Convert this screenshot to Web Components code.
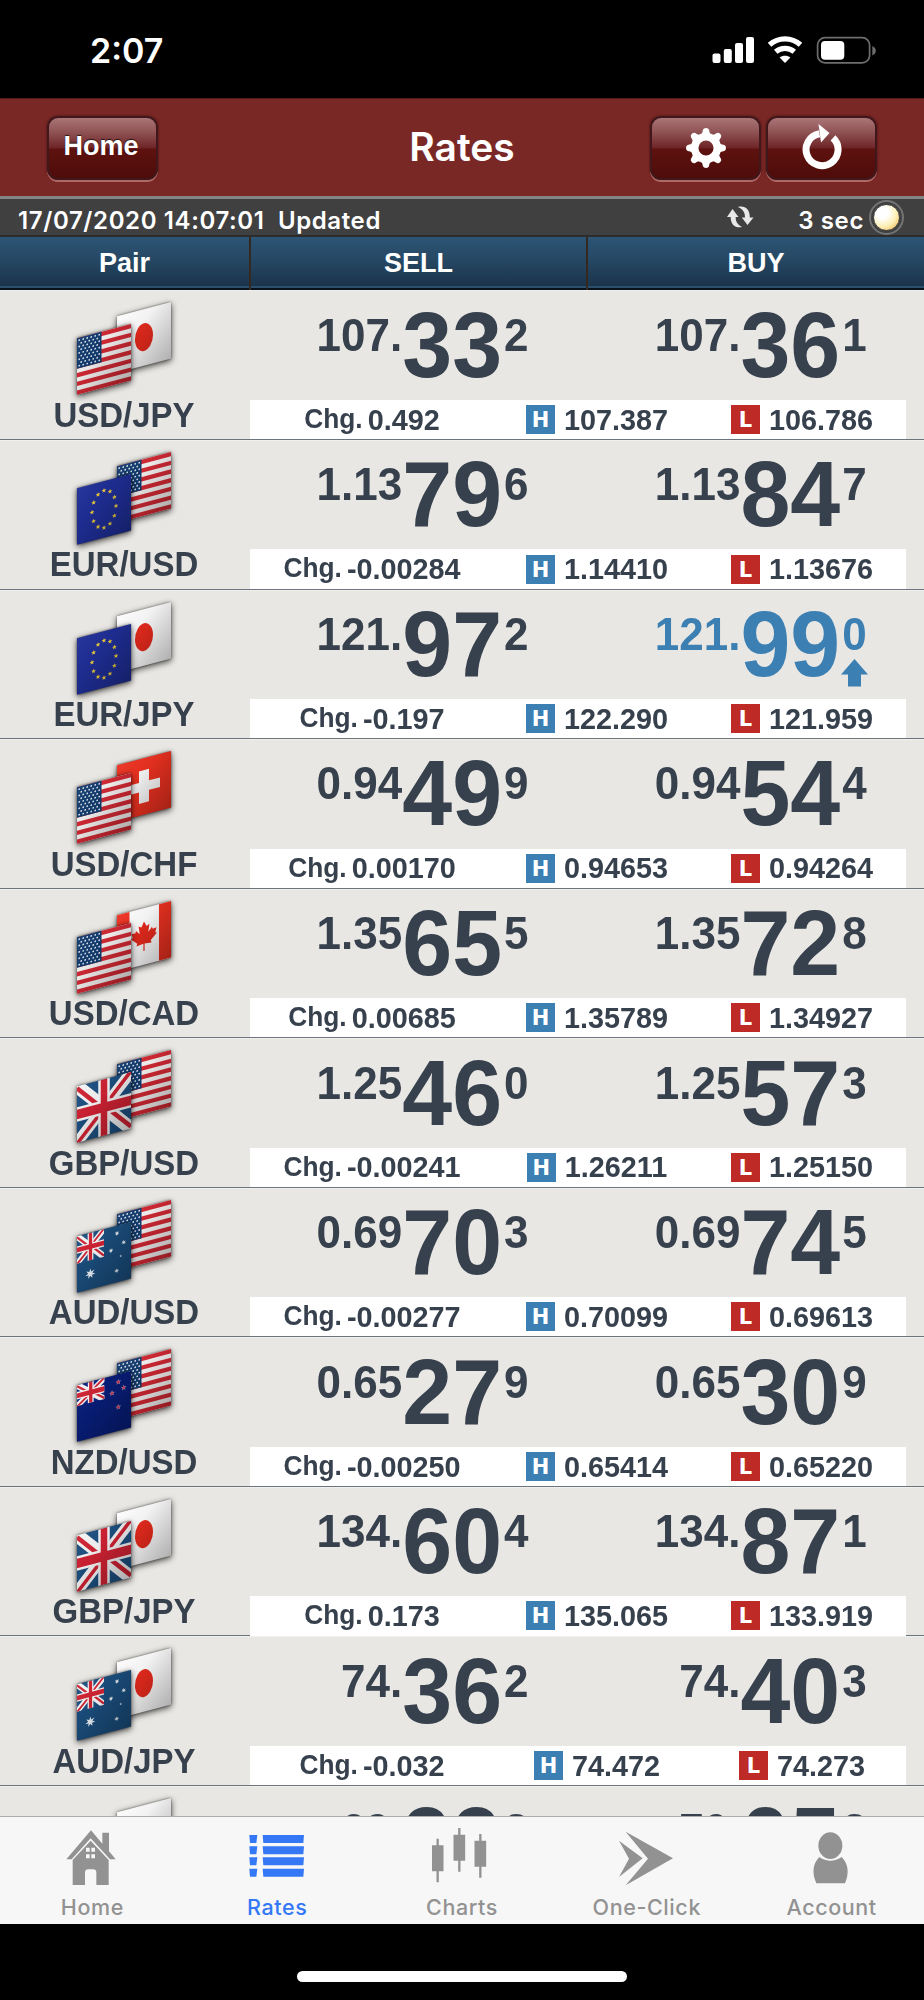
<!DOCTYPE html>
<html lang="en">
<head>
<meta charset="utf-8">
<title>Rates</title>
<style>
  html, body { margin: 0; background: #000; }
  body { width: 924px; height: 2000px; overflow: hidden; font-family: "Liberation Sans", Arial, sans-serif; }
</style>
</head>
<body>
<rates-app></rates-app>

<script>
// ---------- flags, each drawn in a 54 x 56.5 box ----------
const W = 54, H = 56.5;

function star(cx, cy, r, fill, points = 5) {
  let d = "";
  for (let i = 0; i < points * 2; i++) {
    const rr = i % 2 ? r * 0.42 : r;
    const a = -Math.PI / 2 + i * Math.PI / points;
    d += `${(cx + rr * Math.cos(a)).toFixed(2)},${(cy + rr * Math.sin(a)).toFixed(2)} `;
  }
  return `<polygon points="${d}" fill="${fill}"/>`;
}

function unionJack(w, h, blue) {
  const k = w / 54;
  return `<svg width="${w}" height="${h}" viewBox="0 0 ${w} ${h}">
    <rect width="${w}" height="${h}" fill="${blue}"/>
    <path d="M0 0L${w} ${h}M${w} 0L0 ${h}" stroke="#f4f4f4" stroke-width="${12 * k}"/>
    <path d="M0 ${2 * k}L${w / 2} ${h / 2 + 2 * k}M${w} ${h - 2 * k}L${w / 2} ${h / 2 - 2 * k}M${w} ${-k}L${w / 2} ${h / 2 - k}M0 ${h + k}L${w / 2} ${h / 2 + k}" stroke="#cf2233" stroke-width="${4 * k}"/>
    <path d="M${w / 2} 0V${h}" stroke="#f4f4f4" stroke-width="${11.5 * k}"/>
    <path d="M0 ${h / 2}H${w}" stroke="#f4f4f4" stroke-width="${14.5 * k}"/>
    <path d="M${w / 2} 0V${h}" stroke="#cf2233" stroke-width="${6.5 * k}"/>
    <path d="M0 ${h / 2}H${w}" stroke="#cf2233" stroke-width="${9.5 * k}"/>
  </svg>`;
}

const flags = {
  USD() {
    let s = `<rect width="${W}" height="${H}" fill="#f6f3f3"/>`;
    const h = H / 13;
    for (let i = 0; i < 13; i += 2) s += `<rect y="${i * h}" width="${W}" height="${h}" fill="#d32934"/>`;
    s += `<rect width="24.5" height="${h * 7}" fill="#123b6e"/>`;
    for (let r = 0; r < 9; r++)
      for (let c = 0; c < (r % 2 ? 5 : 6); c++)
        s += `<circle cx="${2.2 + c * 4 + (r % 2 ? 2 : 0)}" cy="${2.4 + r * 3.2}" r=".9" fill="#dfe7f0"/>`;
    return s;
  },
  JPY: () => `<rect width="${W}" height="${H}" fill="#fcfcfc"/><ellipse cx="27" cy="28" rx="9" ry="13.8" fill="#e62a1d"/>`,
  EUR() {
    let s = `<rect width="${W}" height="${H}" fill="#1f2e96"/>`;
    for (let i = 0; i < 12; i++) {
      const a = i * Math.PI / 6;
      s += star(27 + 12 * Math.sin(a), 28 - 18.6 * Math.cos(a), 2.5, "#f2cf3a");
    }
    return s;
  },
  CHF: () => `<rect width="${W}" height="${H}" fill="#ec3120"/><path d="M22 12H32V23.5H43V33H32V44.5H22V33H11V23.5H22Z" fill="#f8f8f8"/>`,
  CAD: () => `<rect width="${W}" height="${H}" fill="#fcfcfc"/><rect width="12.5" height="${H}" fill="#ec3120"/><rect x="42" width="12" height="${H}" fill="#ec3120"/>
    <path transform="translate(27 28) scale(1 1.05)" fill="#e62a1d" d="M0-14L2.6-9L5.4-10.5L4.3-3L8-7L8.7-4.8L12.5-5.3L11.2-1L13-.2L6.8 5.5L7.5 8L.6 7.2V14H-.6V7.2L-7.5 8L-6.8 5.5L-13-.2L-11.2-1L-12.5-5.3L-8.7-4.8L-8-7L-4.3-3L-5.4-10.5L-2.6-9Z"/>`,
  GBP: () => unionJack(W, H, "#1c4f80"),
  AUD: () => `<rect width="${W}" height="${H}" fill="#1a4d7c"/>${unionJack(27, 27.5, "#1c4f80")}`
    + star(40, 7.7, 2.5, "#e9f1f6", 7) + star(46.7, 18.4, 2.5, "#e9f1f6", 7) + star(34, 23.4, 2.5, "#e9f1f6", 7)
    + star(43.7, 31.3, 1.4, "#e9f1f6") + star(39.7, 45, 2.5, "#e9f1f6", 7) + star(13.3, 41, 5.2, "#e9f1f6", 7),
  NZD: () => `<rect width="${W}" height="${H}" fill="#081d78"/>${unionJack(27.5, 21, "#0b2280")}`
    + [[41.3, 7.6], [35, 17.3], [46.7, 14.7], [41.3, 32.7]].map(p => star(p[0], p[1], 3, "#b9aecb") + star(p[0], p[1], 2.2, "#d8304a")).join("")
};

class FlagPair extends HTMLElement {
  connectedCallback() {
    const [front, back] = this.getAttribute("pair").split("/");
    this.attachShadow({mode: "open"}).innerHTML = `
      <style>
        :host { display: block; height: 108.5px; }
        svg { display: block; }
        .flag { filter: drop-shadow(0 0 1px rgba(0,0,0,.45)) drop-shadow(0 2px 3px rgba(0,0,0,.7)); }
      </style>
      <svg width="250" height="112" viewBox="0 0 250 112">
        <defs>
          <linearGradient id="shade" x1="0" y1="0" x2="1" y2="1">
            <stop offset="0" stop-color="#fff" stop-opacity=".04"/>
            <stop offset=".35" stop-color="#000" stop-opacity=".04"/>
            <stop offset="1" stop-color="#000" stop-opacity=".3"/>
          </linearGradient>
        </defs>
        <g class="flag"><g transform="matrix(1 -.265 0 1 117 26.3)">${flags[back]()}<rect width="${W}" height="${H}" fill="url(#shade)"/></g></g>
        <g class="flag"><g transform="matrix(1 -.265 0 1 77 48.3)">${flags[front]()}<rect width="${W}" height="${H}" fill="url(#shade)"/></g></g>
      </svg>`;
  }
}
customElements.define("flag-pair", FlagPair);

// ---------- a price: handle, big figures and the last digit ----------
class PriceQuote extends HTMLElement {
  connectedCallback() {
    const [handle, big, last] = this.getAttribute("value").split(" ");
    this.attachShadow({mode: "open"}).innerHTML = `
      <style>
        :host { display: flex; position: relative; justify-content: flex-end; align-items: flex-start; box-sizing: border-box;
          padding-right: 59.5px; height: 109px; font-weight: bold; color: #37414d; }
        :host([up]) { color: #3b7fb3; }
        span { display: block; line-height: 1; transform-origin: 0 84.65%; white-space: nowrap; }
        .small { font-size: 44px; margin-top: 23.4px; transform: scaleY(1.045); }
        .big { font-size: 89.7px; margin: 11.4px 2px 0 0; transform: scaleY(1.025); }
        svg { position: absolute; right: 56px; top: 69px; }
      </style>
      <span class="small">${handle}</span><span class="big">${big}</span><span class="small">${last}</span>
      ${this.hasAttribute("up") ? `<svg width="27" height="28" viewBox="0 0 27 28"><path d="M13.5 0L27 15.5H20V27.5H7V15.5H0Z" fill="currentColor"/></svg>` : ""}`;
  }
}
customElements.define("price-quote", PriceQuote);

class RangeBadge extends HTMLElement {
  connectedCallback() {
    this.attachShadow({mode: "open"}).innerHTML = `
      <style>
        :host { display: flex; align-items: center; justify-content: center; gap: 9px; }
        b { display: block; width: 29px; height: 29px; background: ${this.getAttribute("color")}; color: #fff;
          font: bold 21px/31px "DejaVu Sans", sans-serif; text-align: center; }
        span { transform: scaleY(1.04); padding-top: 1px; }
      </style>
      <b>${this.getAttribute("letter")}</b><span><slot></slot></span>`;
  }
}
customElements.define("range-badge", RangeBadge);

class RateRow extends HTMLElement {
  connectedCallback() {
    const a = n => this.getAttribute(n);
    // a row without a change value shows only its flags and prices
    const full = a("chg") !== "";
    this.attachShadow({mode: "open"}).innerHTML = `
      <style>
        :host { display: grid; grid-template-columns: 250px 1fr; height: 149.57px; flex: none; box-sizing: border-box;
          border-bottom: 1px solid #6c747d; box-shadow: inset 0 1px #f1f0ed; color: #37414d; font-weight: bold; }
        .name { font-size: 33px; line-height: 1; text-align: center; padding-right: 2px;
          transform: scaleY(1.045); transform-origin: 0 84.65%; }
        .quotes { display: grid; grid-template-columns: 338px 1fr; height: 109.5px; }
        price-quote:last-child { padding-right: 57.3px; }
        .bar { display: grid; grid-template-columns: 244px 206px 204px; width: 656px; height: 39.2px; background: #fff;
          font-size: 28.8px; line-height: 1; align-items: center; }
        .chg { display: flex; justify-content: center; align-items: center; gap: 5px; }
        .chg span { transform: scaleY(1.04); padding-top: 1px; }
        small { font-size: 26.3px; transform: scaleY(1.04); position: relative; top: -.5px; }
      </style>
      <div><flag-pair pair="${a("pair")}"></flag-pair>${full ? `<div class="name">${a("pair")}</div>` : ""}</div>
      <div>
        <div class="quotes">
          <price-quote value="${a("sell")}"></price-quote>
          <price-quote value="${a("buy")}" ${this.hasAttribute("up") ? "up" : ""}></price-quote>
        </div>
        ${full ? `<div class="bar">
          <div class="chg"><small>Chg.</small><span>${a("chg")}</span></div>
          <range-badge letter="H" color="#3b7fb3">${a("high")}</range-badge>
          <range-badge letter="L" color="#be2a26">${a("low")}</range-badge>
        </div>` : ""}
      </div>`;
  }
}
customElements.define("rate-row", RateRow);

class StatusBar extends HTMLElement {
  constructor() {
    super();
    this.attachShadow({mode: "open"}).innerHTML = `
      <style>
        :host { display: flex; justify-content: space-between; align-items: center; height: 98px; box-sizing: border-box;
          padding: 2px 47px 0 90px; background: #000; color: #fff; font: 600 34px Inter, sans-serif; }
      </style>
      <span>2:07</span>
      <svg width="165" height="28" viewBox="712 36 165 28" fill="#fff">
        <rect x="712.5" y="53.5" width="8" height="9.5" rx="2"/><rect x="723.8" y="49" width="8" height="14" rx="2"/>
        <rect x="735" y="43" width="8" height="20" rx="2"/><rect x="746" y="37" width="8" height="26" rx="2"/>
        <path d="M785 63L779.6 57.6C782.5 55.2 787.5 55.2 790.4 57.6Z"/>
        <path d="M769.5 44.8C778.5 36.9 791.5 36.9 800.5 44.8M775.7 51.8C781 47.2 789 47.2 794.3 51.8" fill="none" stroke="#fff" stroke-width="5.2"/>
        <rect x="817.6" y="37.6" width="52" height="25.3" rx="7.5" fill="none" stroke="#6d6d6d" stroke-width="1.7"/>
        <rect x="821" y="41" width="23.3" height="18.7" rx="4"/>
        <path d="M872.3 46V55.5C877 53.5 877 48 872.3 46Z" fill="#6d6d6d"/>
      </svg>`;
  }
}
customElements.define("status-bar", StatusBar);

class GlossButton extends HTMLElement {
  constructor() {
    super();
    this.attachShadow({mode: "open"}).innerHTML = `
      <style>
        :host { display: flex; align-items: center; justify-content: center; width: 111px; height: 64px; box-sizing: border-box;
          border: 2px solid #40171a; border-radius: 11px; color: #fff; font: bold 27px/1 "Liberation Sans", sans-serif;
          text-shadow: 0 -1px 1px rgba(0,0,0,.7); padding: 0 3px 2px 0;
          background: linear-gradient(#aa7678 0, #8d5052 25%, #702628 49%, #5e120f 52%, #4e0c0a);
          box-shadow: 0 2px 0 rgba(255,190,190,.45), 0 0 2px 1px rgba(60,15,15,.4); }
        :host([icon]) { padding: 0; }
      </style><slot></slot>`;
  }
}
customElements.define("gloss-button", GlossButton);

class NavBar extends HTMLElement {
  constructor() {
    super();
    let teeth = "";
    for (let i = 0; i < 8; i++) teeth += `<path transform="rotate(${i * 45})" d="M-7-12C-3.5-14-3.6-16-3-18.2Q-2.5-20 0-20T3-18.2C3.6-16 3.5-14 7-12Z"/>`;
    this.attachShadow({mode: "open"}).innerHTML = `
      <style>
        :host { display: grid; grid-template-columns: 1fr auto 1fr; height: 98px; box-sizing: border-box;
          padding: 0 47px; align-items: center; background: #7a2825; color: #fff; border-top: 1px solid #551d1b; }
        h1 { margin: 0 0 2px; font: 600 39px/1 Inter, sans-serif; }
        .right { display: flex; justify-content: flex-end; gap: 5px; }
      </style>
      <gloss-button>Home</gloss-button>
      <h1><slot></slot></h1>
      <div class="right">
        <gloss-button icon><svg width="40" height="42" viewBox="-20 -21 40 42" fill="#fff">${teeth}<circle r="11.3" fill="none" stroke="#fff" stroke-width="7.5"/></svg></gloss-button>
        <gloss-button icon><svg width="40" height="47" viewBox="-20 -25.5 40 47">
          <path d="M-2.5-15.7A16 16 0 1 0 11-11.6" fill="none" stroke="#fff" stroke-width="7"/>
          <path d="M-3.5-25.5L7.5-16.5L-1-7Z" fill="#fff"/>
        </svg></gloss-button>
      </div>`;
  }
}
customElements.define("nav-bar", NavBar);

class UpdateBar extends HTMLElement {
  constructor() {
    super();
    this.attachShadow({mode: "open"}).innerHTML = `
      <style>
        :host { display: flex; align-items: center; height: 41px; box-sizing: border-box; padding: 0 22px 0 18px;
          background: #404040; border-top: 3px solid #858585; border-bottom: 2px solid #2c2c2c; color: #fff;
          font: 600 24px/1 Inter, sans-serif; letter-spacing: .62px; white-space: pre; }
        .date { flex: 1; padding-top: 7px; }
        .sec { padding: 7px 7px 0 44px; }
        .orb { width: 27px; height: 27px; border-radius: 50%; border: 1px solid #484848; outline: 2px solid #747474; outline-offset: 2px;
          background: radial-gradient(circle at 32% 28%, #fff 25%, #fdeeb4 60%, #eaa63d 100%); box-sizing: border-box; margin: 0 2px; }
      </style>
      <span class="date">17/07/2020 14:07:01  Updated</span>
      <svg width="27" height="22" viewBox="0 0 27 22">
        <path d="M5.5 3L11.5 11H8.7C8.5 15 10 18 15 21C9 22.5 3.5 19 3.7 11H0Z" fill="#e8e8e8"/>
        <path d="M20.5 19L14.8 11.5H18C18 7 16.5 3.5 11 1C18-.8 23 3.5 22.8 11.5H26.5Z" fill="#e8e8e8"/>
      </svg>
      <span class="sec">3 sec</span><div class="orb"></div>`;
  }
}
customElements.define("update-bar", UpdateBar);

class ColumnHead extends HTMLElement {
  constructor() {
    super();
    this.attachShadow({mode: "open"}).innerHTML = `
      <style>
        :host { display: grid; grid-template-columns: 251px 337px 1fr; height: 53px; box-sizing: border-box; background: linear-gradient(#2d5575, #254763 45%, #1a3248 96%);
          box-shadow: inset 0 -2px #081019, inset 0 -4px #2a506e; color: #fff; font: bold 27px/53px "Liberation Sans", sans-serif; text-align: center; }
        div { border-right: 2px solid #35291f; }
        div:last-child { border: 0; }
      </style>
      <div>Pair</div><div>SELL</div><div>BUY</div>`;
  }
}
customElements.define("column-head", ColumnHead);

// ---------- bottom tabs ----------
const tabIcons = {
  home: `<svg viewBox="187 140 180 180"><path d="M274 150L308 190V157H328V213L348 237H331L273 174L216 237H200Z"/>
    <path fill-rule="evenodd" d="M273 181L327 239V314H290V277Q290 267 280 267H266Q256 267 256 277V314H219V239ZM259 202V214H270V202ZM275 202V214H286V202ZM259 222V234H270V222ZM275 222V234H286V222Z"/></svg>`,
  rates: `<svg viewBox="742 140 180 180">${[164, 198, 231, 265].map(y => `<path d="M749 ${y}H773L770 ${y + 24}H751ZM789 ${y}H913L911 ${y + 24}H791Z"/>`).join("")}</svg>`,
  charts: `<svg viewBox="1296 140 180 180">${[[1313, 175], [1378, 143], [1441, 161]].map(([x, y]) => `<path d="M${x - 3.5} ${y}h7v20h14v78h-14v33h-7v-33h-14v-78h14Z"/>`).join("")}</svg>`,
  click: `<svg viewBox="464 140 180 180"><path d="M490 154L632 234L490 315L557 235ZM470 181L541 234L470 290L500 235Z"/></svg>`,
  account: `<svg viewBox="1019 140 180 180"><ellipse cx="1104" cy="196" rx="36" ry="40"/><path d="M1071 230Q1104 253 1138 230Q1168 262 1148 309H1062Q1041 262 1071 230Z"/></svg>`
};

class TabItem extends HTMLElement {
  connectedCallback() {
    this.attachShadow({mode: "open"}).innerHTML = `
      <style>
        :host { display: flex; flex-direction: column; align-items: center; flex: 1; padding-top: 10px; color: #929292;
          font: 450 21.5px/26px Inter, sans-serif; letter-spacing: .6px; }
        :host([active]) { color: #3478f6; }
        svg { width: 60px; height: 60px; fill: currentColor; display: block; margin-bottom: 7px; }
      </style>${tabIcons[this.getAttribute("icon")]}<slot></slot>`;
  }
}
customElements.define("tab-item", TabItem);

class TabBar extends HTMLElement {
  constructor() {
    super();
    this.attachShadow({mode: "open"}).innerHTML = `
      <style>:host { display: flex; height: 108px; flex: none; box-sizing: border-box; background: #f7f7f7; border-top: 1px solid #acacac; }</style><slot></slot>`;
  }
}
customElements.define("tab-bar", TabBar);

const rates = [
  ["USD/JPY", "107. 33 2", "107. 36 1", "0.492", "107.387", "106.786"],
  ["EUR/USD", "1.13 79 6", "1.13 84 7", "-0.00284", "1.14410", "1.13676"],
  ["EUR/JPY", "121. 97 2", "121. 99 0", "-0.197", "122.290", "121.959", "up"],
  ["USD/CHF", "0.94 49 9", "0.94 54 4", "0.00170", "0.94653", "0.94264"],
  ["USD/CAD", "1.35 65 5", "1.35 72 8", "0.00685", "1.35789", "1.34927"],
  ["GBP/USD", "1.25 46 0", "1.25 57 3", "-0.00241", "1.26211", "1.25150"],
  ["AUD/USD", "0.69 70 3", "0.69 74 5", "-0.00277", "0.70099", "0.69613"],
  ["NZD/USD", "0.65 27 9", "0.65 30 9", "-0.00250", "0.65414", "0.65220"],
  ["GBP/JPY", "134. 60 4", "134. 87 1", "0.173", "135.065", "133.919"],
  ["AUD/JPY", "74. 36 2", "74. 40 3", "-0.032", "74.472", "74.273"],
  ["NZD/JPY", "69. 99 8", "70. 05 8", "", "", ""]
];

class RatesApp extends HTMLElement {
  constructor() {
    super();
    this.attachShadow({mode: "open"}).innerHTML = `
      <style>
        :host { display: flex; flex-direction: column; width: 924px; height: 2000px; background: #000; }
        .list { display: flex; flex-direction: column; height: 1526px; box-sizing: border-box; padding-top: .4px; overflow: hidden; background: #e9e7e3; }
        .foot { display: flex; justify-content: center; padding-top: 47px; }
        .foot i { width: 330px; height: 11px; border-radius: 6px; background: #fff; }
      </style>
      <status-bar></status-bar>
      <nav-bar>Rates</nav-bar>
      <update-bar></update-bar>
      <column-head></column-head>
      <div class="list">${rates.map(r => `<rate-row pair="${r[0]}" sell="${r[1]}" buy="${r[2]}" chg="${r[3]}" high="${r[4]}" low="${r[5]}" ${r[6] || ""}></rate-row>`).join("")}</div>
      <tab-bar>
        <tab-item icon="home">Home</tab-item>
        <tab-item icon="rates" active>Rates</tab-item>
        <tab-item icon="charts">Charts</tab-item>
        <tab-item icon="click">One-Click</tab-item>
        <tab-item icon="account">Account</tab-item>
      </tab-bar>
      <div class="foot"><i></i></div>`;
  }
}
customElements.define("rates-app", RatesApp);
</script>
</body>
</html>
